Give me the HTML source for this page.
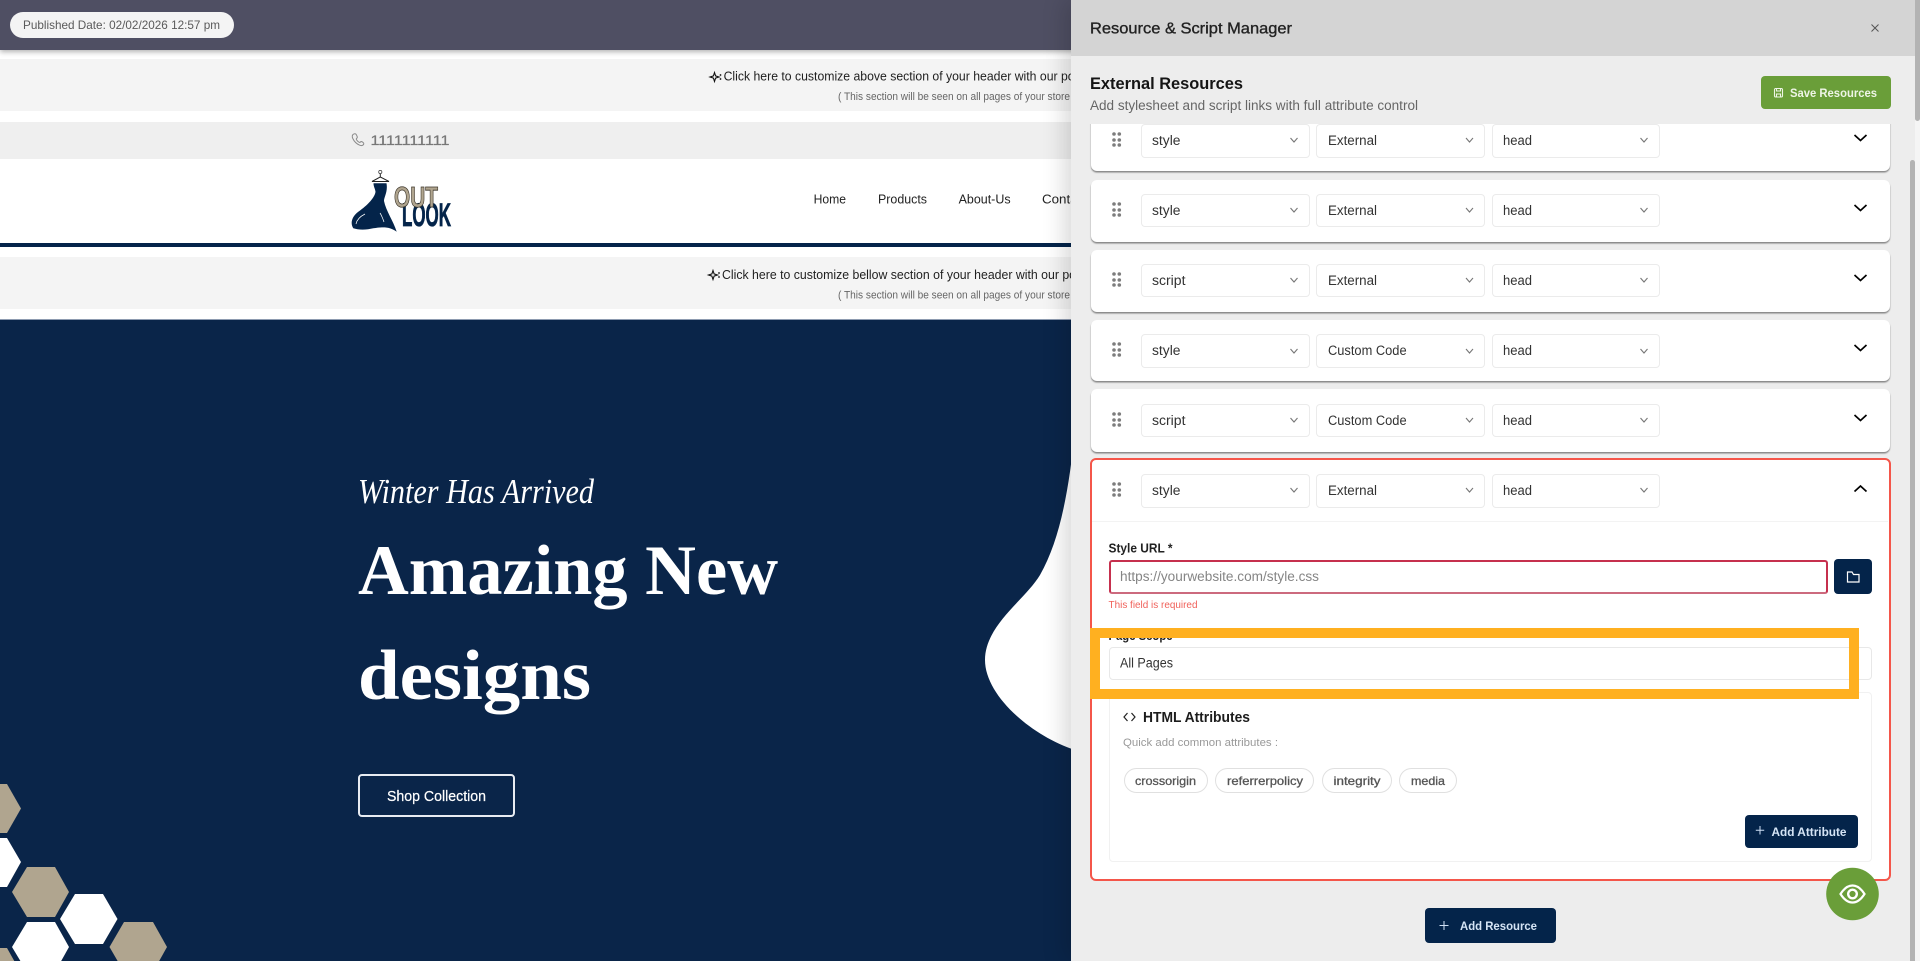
<!DOCTYPE html>
<html lang="en">
<head>
<meta charset="utf-8">
<title>Resource &amp; Script Manager</title>
<style>
html,body{margin:0;padding:0;width:1920px;height:961px;overflow:hidden;background:#fff;font-family:"Liberation Sans",sans-serif}
.b{position:absolute;box-sizing:border-box}
svg{position:absolute;left:0;top:0;width:1920px;height:961px;overflow:visible}
text{font-family:"Liberation Sans",sans-serif}
.card{background:#fff;left:1091px;width:798.5px;border-radius:6px;box-shadow:0 1.5px 1.5px #858585}
.sel{background:#fff;border:1px solid #ebebeb;border-radius:4px;height:33.5px;width:168.5px}
.navy{background:#04244a;border-radius:4px}
.chip{background:#fff;border:1px solid #e0e0e0;border-radius:13px;height:25px;top:768px}
</style>
</head>
<body>
<!-- page behind -->
<div class="b" style="left:0;top:0;width:1920px;height:49.5px;background:#4f4f63;box-shadow:0 2px 5px rgba(0,0,0,.3);z-index:1"></div>
<div class="b" style="left:10px;top:12px;width:224px;height:26px;background:#f4f4f4;border-radius:13px;z-index:2"></div>
<div class="b" style="left:0;top:59px;width:1920px;height:52px;background:#f4f4f4"></div>
<div class="b" style="left:0;top:122px;width:1920px;height:37px;background:#efefef"></div>
<div class="b" style="left:0;top:243px;width:1920px;height:4px;background:#04244a"></div>
<div class="b" style="left:0;top:257px;width:1920px;height:52px;background:#f4f4f4"></div>
<div class="b" style="left:0;top:319px;width:1920px;height:642px;background:#0a2549;border-top:1px solid #8d9bb0"></div>
<div class="b" style="left:358px;top:774px;width:157px;height:43px;border:2px solid #e8ecf2;border-radius:4px"></div>

<svg viewBox="0 0 1920 961" style="z-index:3">
  <text x="23" y="29" font-size="12" fill="#5a5a5a" textLength="197" lengthAdjust="spacingAndGlyphs">Published Date: 02/02/2026 12:57 pm</text>

  <path d="M714.500,72.500l1.100,3.400l3.400,1.100l-3.400,1.100l-1.100,3.400l-1.100-3.400l-3.400-1.100l3.400-1.100Z" fill="none" stroke="#111" stroke-width="1.100"/><circle cx="720.500" cy="75" r=".9" fill="#111"/><circle cx="720.500" cy="79" r=".9" fill="#111"/>
  <text x="723.6" y="80.5" font-size="13" fill="#1f1f1f" textLength="351" lengthAdjust="spacingAndGlyphs">Click here to customize above section of your header with our po</text>
  <text x="838" y="100" font-size="11" fill="#666" textLength="232" lengthAdjust="spacingAndGlyphs">( This section will be seen on all pages of your store</text>

  <path d="M353,134.5c1.5-1.2,2.8-1,3.4.3l.8,1.8c.3.8,0,1.4-.7,1.9-.3.3-.3.7-.1,1.1.7,1.2,1.6,2.1,2.8,2.7.4.2.8.1,1.1-.2.6-.6,1.2-.7,1.9-.3l.9.7c.9.7.9,1.6.1,2.4-.8.8-2.3.9-3.8.2-3-1.4-5.3-3.8-6.6-6.6-.8-1.6-.7-3,.2-4Z" fill="none" stroke="#8a8a8a" stroke-width="1"/>
  <text x="370.500" y="145" font-size="14" fill="#777" stroke="#777" stroke-width=".25" textLength="79" lengthAdjust="spacingAndGlyphs">1111111111</text>

  <!-- logo -->
  <g>
    <circle cx="380.3" cy="172" r="1.6" fill="none" stroke="#333" stroke-width=".7"/>
    <path d="M380.3,174v3L372,181.5h17L380.3,177" fill="none" stroke="#222" stroke-width="1"/>
    <path d="M373.500,183.300 L386.500,183.300 C388,192 384,197 384,201 C386,211 393.300,221 396.700,231.700 C390,226.700 383.300,226.700 373.300,228.300 C366.700,230 358,230 353.300,228.300 C350,223.300 351.700,216.700 358.300,211.700 C368,205 375,197 375.500,191.700 C375,188.300 373.500,186.700 373.500,183.300 Z" fill="#04244a"/>
    <path d="M356,224c1-5,5-8,9-10M384,222c-1-3-2-6-4-9" fill="none" stroke="#fff" stroke-width=".7"/>
    <text x="402" y="226" font-size="32" font-weight="bold" fill="#04244a" stroke="#04244a" stroke-width=".8" textLength="49" lengthAdjust="spacingAndGlyphs">LOOK</text>
    <text x="394" y="207" font-size="29" font-weight="bold" fill="#b0a58f" stroke="#3a3328" stroke-width=".8" textLength="44" lengthAdjust="spacingAndGlyphs">OUT</text>
  </g>

  <text x="813.6" y="203.5" font-size="13" fill="#222" textLength="32.4" lengthAdjust="spacingAndGlyphs">Home</text>
  <text x="878" y="203.5" font-size="13" fill="#222" textLength="49" lengthAdjust="spacingAndGlyphs">Products</text>
  <text x="958.6" y="203.5" font-size="13" fill="#222" textLength="52" lengthAdjust="spacingAndGlyphs">About-Us</text>
  <text x="1042" y="203.5" font-size="13" fill="#222" textLength="46" lengthAdjust="spacingAndGlyphs">Contact</text>

  <path d="M713,270.500l1.100,3.400l3.400,1.100l-3.400,1.100l-1.100,3.400l-1.100-3.400l-3.400-1.100l3.400-1.100Z" fill="none" stroke="#111" stroke-width="1.100"/><circle cx="719" cy="273" r=".9" fill="#111"/><circle cx="719" cy="277" r=".9" fill="#111"/>
  <text x="722" y="279" font-size="13" fill="#1f1f1f" textLength="354" lengthAdjust="spacingAndGlyphs">Click here to customize bellow section of your header with our po</text>
  <text x="838" y="298.5" font-size="11" fill="#666" textLength="232" lengthAdjust="spacingAndGlyphs">( This section will be seen on all pages of your store</text>

  <!-- hero -->
  <path d="M1075,430 C1069,490 1060,540 1040,575 C1025,600 985,625 985,660 C985,695 1030,735 1075,750 Z" fill="#fff"/>
  <text x="358" y="503" style="font-family:'Liberation Serif',serif;font-style:italic" font-size="35" fill="#fff" textLength="236" lengthAdjust="spacingAndGlyphs">Winter Has Arrived</text>
  <text x="358" y="594" style="font-family:'Liberation Serif',serif;font-weight:bold" font-size="71" fill="#fff" textLength="420" lengthAdjust="spacingAndGlyphs">Amazing New</text>
  <text x="358" y="699" style="font-family:'Liberation Serif',serif;font-weight:bold" font-size="71" fill="#fff" textLength="233" lengthAdjust="spacingAndGlyphs">designs</text>
  <text x="387" y="801" font-size="14.5" fill="#fff" stroke="#fff" stroke-width=".2" textLength="99" lengthAdjust="spacingAndGlyphs">Shop Collection</text>

  <!-- hexagons -->
  <g fill="#b0a58f">
    <polygon points="-36,808.5 -21,784 7,784 21,808.5 7,833 -21,833"/>
    <polygon points="12,892 27,867 55,867 69,892 55,917 27,917"/>
    <polygon points="109.500,947 124,922 153,922 167,947 153,972 124,972"/>
    <polygon points="-36,973 -21,948 7,948 21,973 7,998 -21,998"/>
  </g>
  <g fill="#fff">
    <polygon points="-36,862 -21,838 7,838 21,862 7,887 -21,887"/>
    <polygon points="60,919 75,894 103,894 117.500,919 103,944 75,944"/>
    <polygon points="12,947 27,922 55,922 69,947 55,972 27,972"/>
  </g>
</svg>

<!-- panel -->
<div class="b" style="left:1071px;top:0;width:849px;height:961px;background:#ededed;box-shadow:-6px 0 22px rgba(0,0,0,.16);z-index:4"></div>

<div style="position:absolute;left:0;top:0;z-index:5;width:1920px;height:961px">
  <div class="b card" style="top:105px;height:66px"></div>
  <div class="b card" style="top:179.500px;height:62px"></div>
  <div class="b card" style="top:250px;height:61.500px"></div>
  <div class="b card" style="top:320px;height:61px"></div>
  <div class="b card" style="top:389px;height:62.500px"></div>
  <div class="b" style="left:1090px;top:458px;width:800.500px;height:422.500px;background:#fff;border:2px solid #f4564a;border-radius:6px"></div>
  <div class="b" style="left:1092px;top:521px;width:796px;height:1px;background:#f3f3f3"></div>

  <div class="b" style="left:1071px;top:56px;width:839px;height:68px;background:#ededed"></div>
  <div class="b" style="left:1071px;top:0;width:849px;height:56px;background:#d4d4d4"></div>
  <div class="b" style="left:1761px;top:76px;width:130px;height:33px;background:#6a9e39;border-radius:4px"></div>

  <!-- selects -->
  <div class="b sel" style="left:1141px;top:124px"></div><div class="b sel" style="left:1316px;top:124px"></div><div class="b sel" style="left:1491.500px;top:124px"></div>
  <div class="b sel" style="left:1141px;top:193.500px"></div><div class="b sel" style="left:1316px;top:193.500px"></div><div class="b sel" style="left:1491.500px;top:193.500px"></div>
  <div class="b sel" style="left:1141px;top:263.500px"></div><div class="b sel" style="left:1316px;top:263.500px"></div><div class="b sel" style="left:1491.500px;top:263.500px"></div>
  <div class="b sel" style="left:1141px;top:334px"></div><div class="b sel" style="left:1316px;top:334px"></div><div class="b sel" style="left:1491.500px;top:334px"></div>
  <div class="b sel" style="left:1141px;top:403.500px"></div><div class="b sel" style="left:1316px;top:403.500px"></div><div class="b sel" style="left:1491.500px;top:403.500px"></div>
  <div class="b sel" style="left:1141px;top:474px"></div><div class="b sel" style="left:1316px;top:474px"></div><div class="b sel" style="left:1491.500px;top:474px"></div>

  <!-- form -->
  <div class="b" style="left:1109px;top:560px;width:719px;height:33.500px;background:#fff;border:2px solid #c6304e;border-bottom-color:#cc6a7e;border-radius:3px"></div>
  <div class="b navy" style="left:1834px;top:559px;width:38px;height:35px"></div>
  <div class="b" style="left:1109px;top:647px;width:763px;height:33px;background:#fff;border:1px solid #e8e8e8;border-radius:4px"></div>
  <div class="b" style="left:1109px;top:692px;width:763px;height:170px;background:#fff;border:1px solid #f1f1f1;border-radius:4px"></div>
  <div class="b chip" style="left:1123.500px;width:84.500px"></div>
  <div class="b chip" style="left:1215px;width:99px"></div>
  <div class="b chip" style="left:1322px;width:69.500px"></div>
  <div class="b chip" style="left:1399px;width:57.500px"></div>
  <div class="b navy" style="left:1744.500px;top:815px;width:113.500px;height:32.500px"></div>
  <div class="b navy" style="left:1425px;top:908px;width:131px;height:35px"></div>

  <!-- scrollbars -->
  <div class="b" style="left:1915px;top:70px;width:5px;height:891px;background:#f5f5f5"></div>
  <div class="b" style="left:1915px;top:0;width:5px;height:121px;background:#b3b3b3;border-radius:0 0 3px 3px"></div>
  <div class="b" style="left:1910px;top:160px;width:5px;height:801px;background:#b3b3b3;border-radius:3px 3px 0 0"></div>

  <svg viewBox="0 0 1920 961">
    <text x="1090" y="33.500" font-size="16" fill="#222" stroke="#222" stroke-width=".35" textLength="202" lengthAdjust="spacingAndGlyphs">Resource &amp; Script Manager</text>
    <path d="M1871.500,24.500l7,7m0-7l-7,7" stroke="#555" stroke-width="1" fill="none"/>
    <text x="1090" y="89" font-size="17" font-weight="bold" fill="#151515" textLength="153" lengthAdjust="spacingAndGlyphs">External Resources</text>
    <text x="1090" y="110" font-size="13.500" fill="#666" textLength="328" lengthAdjust="spacingAndGlyphs">Add stylesheet and script links with full attribute control</text>

    <g fill="none" stroke="#eef5e6" stroke-width="1.100"><rect x="1774.500" y="88.500" width="8" height="8.500" rx="1.200"/><path d="M1776.500,88.500v2.500h4v-2.500M1776.500,97v-3h4v3"/></g>
    <text x="1790" y="97" font-size="12" font-weight="bold" fill="#eef5e6" textLength="87" lengthAdjust="spacingAndGlyphs">Save Resources</text>

    <!-- row text -->
    <g font-size="13.500" fill="#333">
      <text x="1152" y="145" textLength="28.500" lengthAdjust="spacingAndGlyphs">style</text><text x="1328" y="145" textLength="49" lengthAdjust="spacingAndGlyphs">External</text><text x="1503" y="145" textLength="29" lengthAdjust="spacingAndGlyphs">head</text>
      <text x="1152" y="215" textLength="28.500" lengthAdjust="spacingAndGlyphs">style</text><text x="1328" y="215" textLength="49" lengthAdjust="spacingAndGlyphs">External</text><text x="1503" y="215" textLength="29" lengthAdjust="spacingAndGlyphs">head</text>
      <text x="1152" y="285" textLength="33.500" lengthAdjust="spacingAndGlyphs">script</text><text x="1328" y="285" textLength="49" lengthAdjust="spacingAndGlyphs">External</text><text x="1503" y="285" textLength="29" lengthAdjust="spacingAndGlyphs">head</text>
      <text x="1152" y="355" textLength="28.500" lengthAdjust="spacingAndGlyphs">style</text><text x="1328" y="355" textLength="78.600" lengthAdjust="spacingAndGlyphs">Custom Code</text><text x="1503" y="355" textLength="29" lengthAdjust="spacingAndGlyphs">head</text>
      <text x="1152" y="425" textLength="33.500" lengthAdjust="spacingAndGlyphs">script</text><text x="1328" y="425" textLength="78.600" lengthAdjust="spacingAndGlyphs">Custom Code</text><text x="1503" y="425" textLength="29" lengthAdjust="spacingAndGlyphs">head</text>
      <text x="1152" y="495" textLength="28.500" lengthAdjust="spacingAndGlyphs">style</text><text x="1328" y="495" textLength="49" lengthAdjust="spacingAndGlyphs">External</text><text x="1503" y="495" textLength="29" lengthAdjust="spacingAndGlyphs">head</text>
    </g>

    <!-- select chevrons -->
    <g fill="none" stroke="#777" stroke-width="1.100">
      <path d="M1290.500,138l3.500,4l3.500-4M1466,138l3.500,4l3.500-4M1640.500,138l3.500,4l3.500-4"/>
      <path d="M1290.500,208l3.500,4l3.500-4M1466,208l3.500,4l3.500-4M1640.500,208l3.500,4l3.500-4"/>
      <path d="M1290.500,278l3.500,4l3.500-4M1466,278l3.500,4l3.500-4M1640.500,278l3.500,4l3.500-4"/>
      <path d="M1290.500,349l3.500,4l3.500-4M1466,349l3.500,4l3.500-4M1640.500,349l3.500,4l3.500-4"/>
      <path d="M1290.500,418l3.500,4l3.500-4M1466,418l3.500,4l3.500-4M1640.500,418l3.500,4l3.500-4"/>
      <path d="M1290.500,488l3.500,4l3.500-4M1466,488l3.500,4l3.500-4M1640.500,488l3.500,4l3.500-4"/>
    </g>
    <!-- big chevrons -->
    <g fill="none" stroke="#000" stroke-width="1.700">
      <path d="M1854.500,135l6,5.500l6-5.500"/>
      <path d="M1854.500,205l6,5.500l6-5.500"/>
      <path d="M1854.500,275l6,5.500l6-5.500"/>
      <path d="M1854.500,345l6,5.500l6-5.500"/>
      <path d="M1854.500,415l6,5.500l6-5.500"/>
      <path d="M1854.500,491.500l6-5.500l6,5.500"/>
    </g>
    <!-- drag dots -->
    <g fill="#7d7d7d">
      <circle cx="1114" cy="134" r="1.800"/><circle cx="1119.300" cy="134" r="1.800"/><circle cx="1114" cy="140" r="1.800"/><circle cx="1119.300" cy="140" r="1.800"/><circle cx="1114" cy="145" r="1.800"/><circle cx="1119.300" cy="145" r="1.800"/>
      <circle cx="1114" cy="204" r="1.800"/><circle cx="1119.300" cy="204" r="1.800"/><circle cx="1114" cy="210" r="1.800"/><circle cx="1119.300" cy="210" r="1.800"/><circle cx="1114" cy="215" r="1.800"/><circle cx="1119.300" cy="215" r="1.800"/>
      <circle cx="1114" cy="274" r="1.800"/><circle cx="1119.300" cy="274" r="1.800"/><circle cx="1114" cy="280" r="1.800"/><circle cx="1119.300" cy="280" r="1.800"/><circle cx="1114" cy="285" r="1.800"/><circle cx="1119.300" cy="285" r="1.800"/>
      <circle cx="1114" cy="344" r="1.800"/><circle cx="1119.300" cy="344" r="1.800"/><circle cx="1114" cy="350" r="1.800"/><circle cx="1119.300" cy="350" r="1.800"/><circle cx="1114" cy="355" r="1.800"/><circle cx="1119.300" cy="355" r="1.800"/>
      <circle cx="1114" cy="414" r="1.800"/><circle cx="1119.300" cy="414" r="1.800"/><circle cx="1114" cy="420" r="1.800"/><circle cx="1119.300" cy="420" r="1.800"/><circle cx="1114" cy="425" r="1.800"/><circle cx="1119.300" cy="425" r="1.800"/>
      <circle cx="1114" cy="484" r="1.800"/><circle cx="1119.300" cy="484" r="1.800"/><circle cx="1114" cy="490" r="1.800"/><circle cx="1119.300" cy="490" r="1.800"/><circle cx="1114" cy="495" r="1.800"/><circle cx="1119.300" cy="495" r="1.800"/>
    </g>

    <text x="1108.500" y="552.500" font-size="12.500" font-weight="bold" fill="#222" textLength="64" lengthAdjust="spacingAndGlyphs">Style URL *</text>
    <text x="1120" y="581" font-size="13.500" fill="#858585" textLength="199" lengthAdjust="spacingAndGlyphs">https://yourwebsite.com/style.css</text>
    <text x="1108.500" y="608" font-size="10.500" fill="#f0615a" textLength="89" lengthAdjust="spacingAndGlyphs">This field is required</text>
    <path d="M1847.500,572h4.500l1.500,2.500h5.500v7.500h-11.500Z" fill="none" stroke="#fff" stroke-width="1.200"/>

    <text x="1108.500" y="640" font-size="12.500" font-weight="bold" fill="#222" textLength="64" lengthAdjust="spacingAndGlyphs">Page Scope</text>
    <text x="1120" y="667.500" font-size="13.500" fill="#333" textLength="53" lengthAdjust="spacingAndGlyphs">All Pages</text>

    <path d="M1127.500,713l-3.500,4l3.500,4M1131.500,713l3.500,4l-3.500,4" fill="none" stroke="#222" stroke-width="1.200"/>
    <text x="1143" y="722" font-size="14.500" font-weight="bold" fill="#1c1c1c" textLength="107" lengthAdjust="spacingAndGlyphs">HTML Attributes</text>
    <text x="1123" y="746" font-size="11" fill="#999" textLength="155" lengthAdjust="spacingAndGlyphs">Quick add common attributes :</text>

    <g font-size="12" fill="#555" stroke="#555" stroke-width=".3">
      <text x="1135" y="785" textLength="61" lengthAdjust="spacingAndGlyphs">crossorigin</text>
      <text x="1227" y="785" textLength="76" lengthAdjust="spacingAndGlyphs">referrerpolicy</text>
      <text x="1333.500" y="785" textLength="47" lengthAdjust="spacingAndGlyphs">integrity</text>
      <text x="1411" y="785" textLength="34" lengthAdjust="spacingAndGlyphs">media</text>
    </g>

    <path d="M1760,826v8.500M1755.800,830.200h8.400" stroke="#cfe0f5" stroke-width="1" fill="none"/>
    <text x="1771.500" y="836" font-size="12" font-weight="bold" fill="#d5e4f5" textLength="75" lengthAdjust="spacingAndGlyphs">Add Attribute</text>

    <path d="M1444,921v9M1439.500,925.500h9" stroke="#cfe0f5" stroke-width="1" fill="none"/>
    <text x="1460" y="930" font-size="12" font-weight="bold" fill="#d5e4f5" textLength="77" lengthAdjust="spacingAndGlyphs">Add Resource</text>

    <!-- eye fab -->
    <circle cx="1852.500" cy="894" r="26.300" fill="#6a9e39"/>
    <path d="M1840.500,894c3.500-5.500,7.500-8.500,12-8.500s8.500,3,12,8.500c-3.500,5.500-7.500,8.500-12,8.500s-8.500-3-12-8.500Z" fill="none" stroke="#fff" stroke-width="2.200"/>
    <circle cx="1852.500" cy="894" r="4.300" fill="none" stroke="#fff" stroke-width="2.400"/>
  </svg>

  <!-- annotation rectangle -->
  <div class="b" style="left:1090px;top:628px;width:769px;height:71px;border:10px solid #ffb020"></div>
</div>
</body>
</html>
